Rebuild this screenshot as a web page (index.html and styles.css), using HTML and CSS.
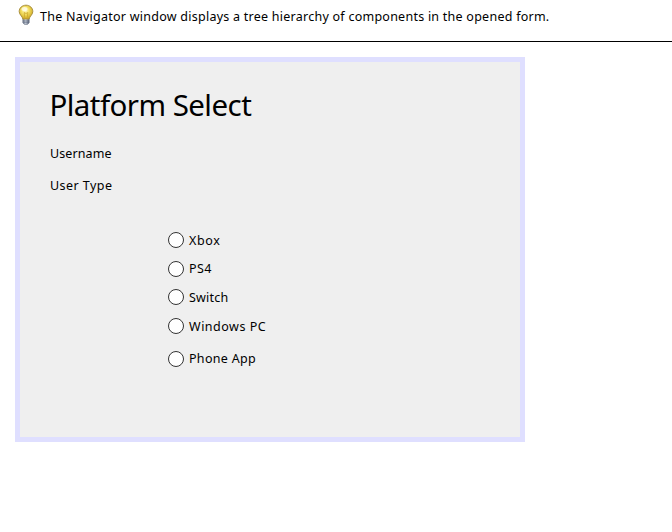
FILE: index.html
```html
<!DOCTYPE html>
<html lang="en">
<head>
<meta charset="utf-8">
<title>Platform Select</title>
<link rel="stylesheet" href="styles.css">
</head>
<body>
<header class="hint">
<svg class="bulb" width="16" height="22" viewBox="0 0 16 22">
<defs>
<radialGradient id="glass" cx="45%" cy="38%" r="62%"><stop offset="0" stop-color="#fffbd0"/><stop offset=".45" stop-color="#f3df62"/><stop offset="1" stop-color="#cda51d"/></radialGradient>
<linearGradient id="cap"><stop offset="0" stop-color="#6d7688"/><stop offset=".45" stop-color="#e0e7f1"/><stop offset="1" stop-color="#4e586d"/></linearGradient>
</defs>
<path d="M4.800 14.500h6.400v4.200L9.500 20.500h-3L4.800 18.700z" fill="url(#cap)" stroke="#8a929e" stroke-width=".8"/>
<path d="M5 17h6M5.200 18.800h5.600" stroke="#5b657a" stroke-width=".8"/>
<path d="M8 1.200C4.100 1.200 1.200 4 1.200 7.500c0 3.400 3.100 4.500 3.700 7.500h6.200c.6-3 3.700-4.100 3.700-7.500C14.800 4 11.900 1.200 8 1.200z" fill="url(#glass)" stroke="#a9903e"/>
<path d="M6.700 14.500 6.200 8.500l1.800 1 1.800-1-.5 6" fill="none" stroke="#d0ab30" stroke-width=".9"/>
<ellipse cx="6.500" cy="5" rx="3" ry="2" fill="#fffef0" opacity=".75"/>
</svg>
<span class="hint-text">The Navigator window displays a tree hierarchy of components in the opened form.</span>
</header>
<main class="form">
<h1 class="title">Platform Select</h1>
<div class="label username">Username</div>
<div class="label usertype">User Type</div>
<div class="options">
<label class="option"><input type="radio" name="platform"><span class="xbox">Xbox</span></label>
<label class="option"><input type="radio" name="platform"><span class="ps">PS4</span></label>
<label class="option"><input type="radio" name="platform"><span class="switch">Switch</span></label>
<label class="option"><input type="radio" name="platform"><span class="windows">Windows PC</span></label>
<label class="option phone-row"><input type="radio" name="platform"><span class="phone">Phone App</span></label>
</div>
</main>
</body>
</html>
```
FILE: styles.css
```css
* { box-sizing: border-box; }
body {
  margin: 0;
  background: #fff;
  color: #000;
  font: 12.500px/16px "Noto Sans", "DejaVu Sans", sans-serif;
  overflow: hidden;
}
.hint {
  display: flex;
  align-items: flex-start;
  height: 42px;
  padding: 4px 0 0 18px;
  border-bottom: 1px solid #000;
}
.bulb { flex: none; margin-right: 6px; }
.hint-text { padding-top: 5px; white-space: nowrap; letter-spacing: .25px; }
.form {
  width: 510px;
  height: 385px;
  margin: 15px 0 0 15px;
  padding: 23px 30px 0;
  background: #efefef;
  border: 5px solid #dfdfff;
}
.title {
  margin: 0 0 0 -.5px;
  font-size: 29.500px;
  font-weight: 400;
  line-height: 40px;
  letter-spacing: -.55px;
  white-space: nowrap;
}
.label { letter-spacing: .45px; }
.username { margin-top: 21px; letter-spacing: .1px; }
.usertype { margin-top: 16px; }
.options {
  display: flex;
  flex-direction: column;
  gap: 12.700px;
  margin: 38px 0 0 118px;
}
.option {
  display: flex;
  align-items: center;
  gap: 5px;
  height: 16px;
  letter-spacing: .4px;
  white-space: nowrap;
}
.xbox, .switch, .windows { padding-top: 2px; }
.xbox { letter-spacing: .6px; }
.switch { letter-spacing: .2px; }
.windows { letter-spacing: .5px; }
.phone { letter-spacing: .3px; }
.phone-row { margin-top: 4px; }
.option input {
  appearance: none;
  width: 16px;
  height: 16px;
  margin: 0;
  background: #fff;
  border: 1px solid #333;
  border-radius: 50%;
}
```
